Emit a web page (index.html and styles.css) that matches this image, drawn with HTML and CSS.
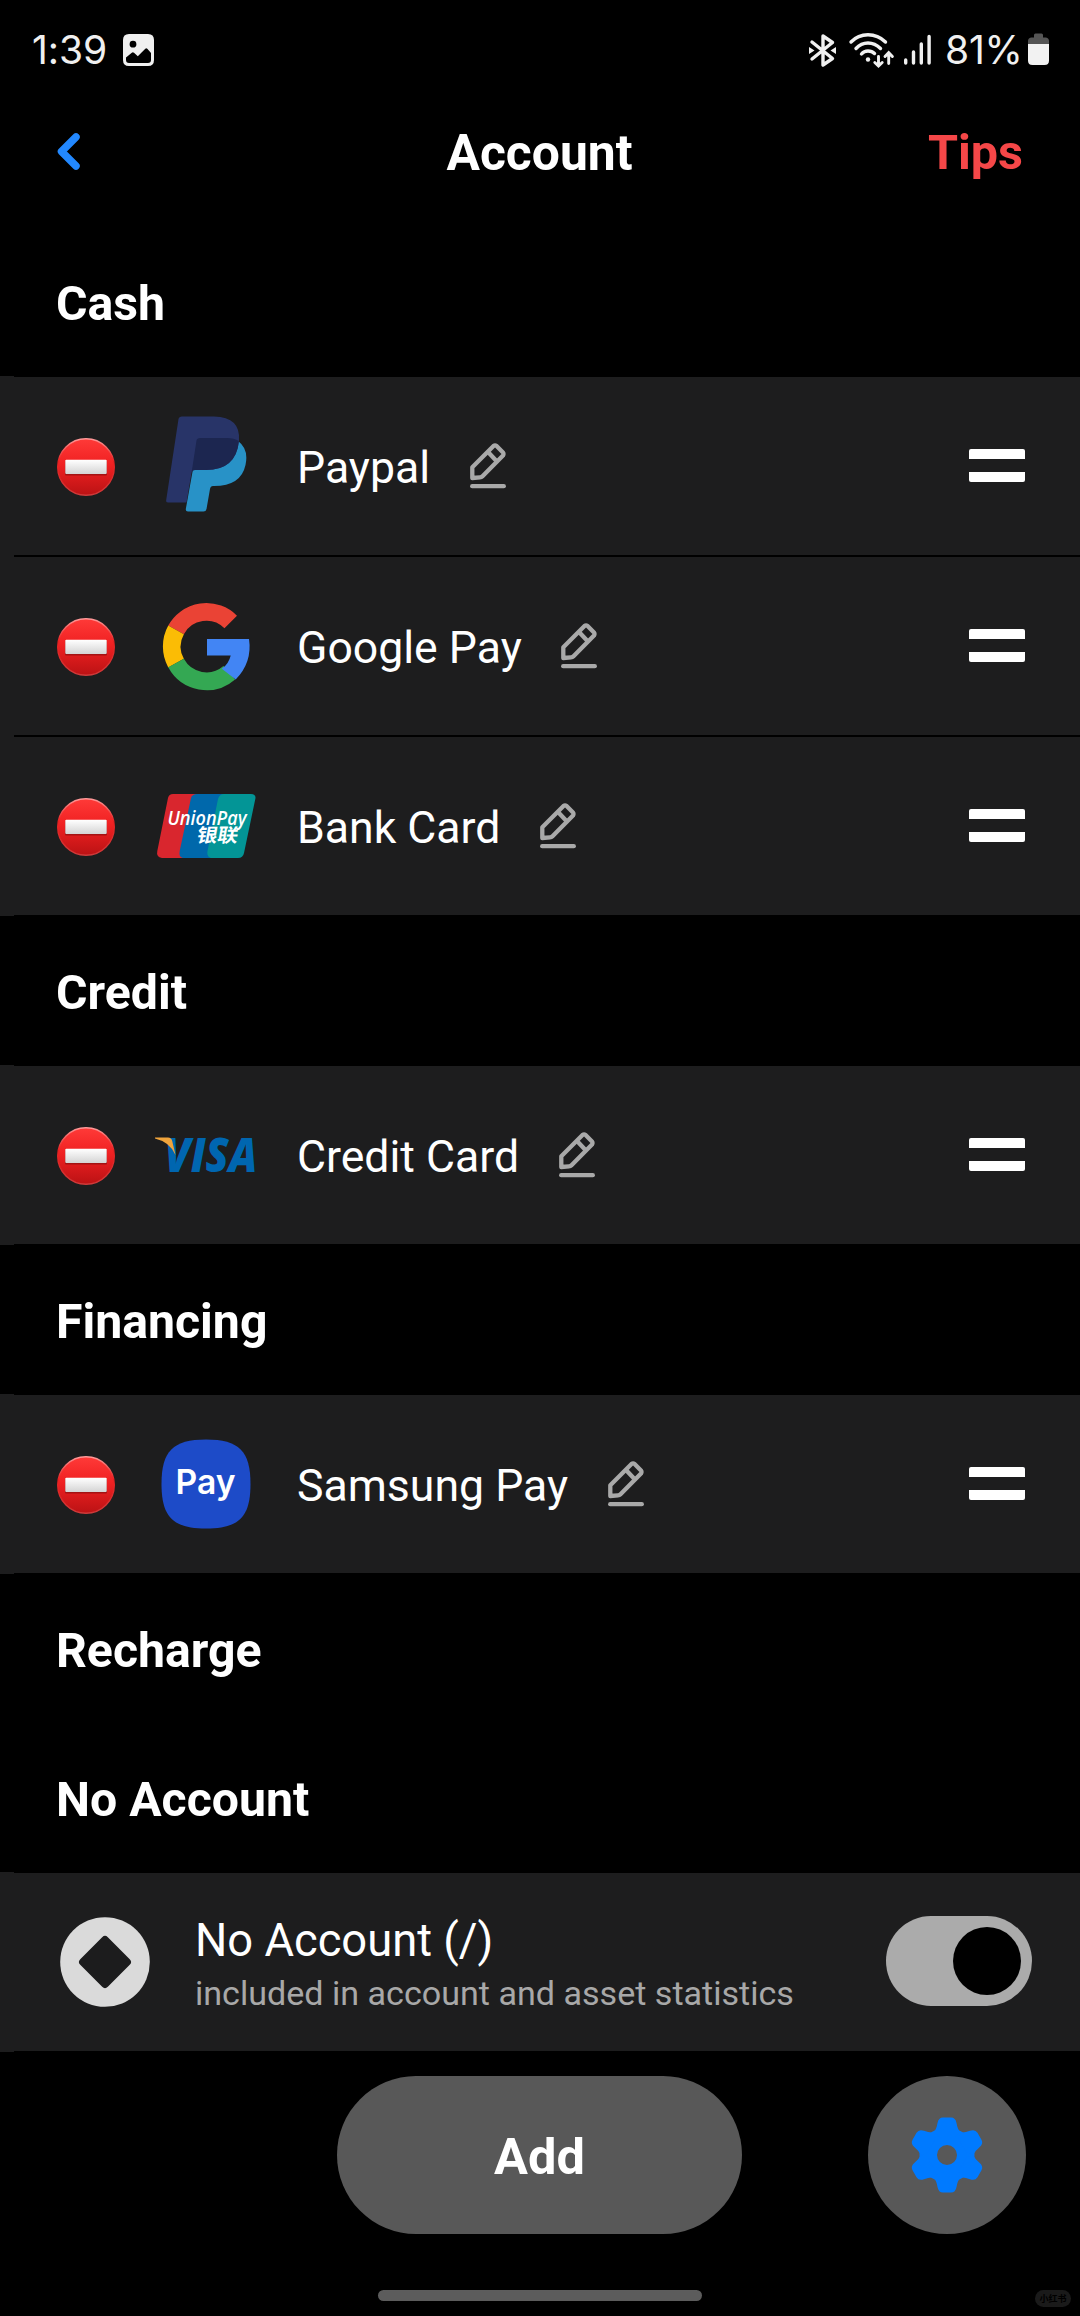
FILE: index.html
```
<!DOCTYPE html>
<html lang="en">
<head>
<meta charset="utf-8">
<title>Account</title>
<link rel="stylesheet" href="styles.css">
</head>
<body>
<svg width="0" height="0" class="defs" aria-hidden="true">
  <defs>
    <linearGradient id="red" x1="0" y1="0" x2="0" y2="1"><stop offset="0" stop-color="#ff3a38"/><stop offset=".45" stop-color="#f02122"/><stop offset="1" stop-color="#bb1214"/></linearGradient>
    <linearGradient id="rim" x1="0" y1="0" x2="0" y2="1"><stop offset="0" stop-color="#ff9a9a"/><stop offset=".4" stop-color="#e82020"/><stop offset="1" stop-color="#cf3a3a"/></linearGradient>
    <linearGradient id="bar" x1="0" y1="0" x2="0" y2="1"><stop offset="0" stop-color="#ffffff"/><stop offset="1" stop-color="#d4d4d4"/></linearGradient>
    <symbol id="remove" viewBox="0 0 58 58">
      <circle cx="29" cy="29" r="28.3" fill="url(#red)" stroke="url(#rim)" stroke-width="1.4"/>
      <rect x="8" y="23" width="42" height="14.6" rx="1" fill="#8c0f10" opacity=".7"/>
      <rect x="8.3" y="21.8" width="41.4" height="14.2" rx="1" fill="url(#bar)"/>
    </symbol>
    <symbol id="edit" viewBox="0 0 36 46">
      <g fill="none" stroke="#a9a9a9" stroke-width="4.300" stroke-linejoin="round" stroke-linecap="round">
        <path d="M2.3 24.2 23.5 3Q25 1.800 26.600 3L33 9.500Q34 11 33 12.600L12.500 33.200Q11.500 34.300 10 34.300L2.300 35Z"/>
        <path d="M18.500 9.500 26 17.500"/>
        <path d="M2.200 43.200H33.800"/>
      </g>
    </symbol>
  </defs>
</svg>
<div class="screen">
  <div class="status">
    <span class="clock">1:39</span>
    <svg class="photo" width="31" height="32" viewBox="0 0 31 32"><path fill="#f0f0f0" fill-rule="evenodd" d="M6 0H25Q31 0 31 6V26Q31 32 25 32H6Q0 32 0 26V6Q0 0 6 0ZM10 6.800A3.400 3.400 0 1 0 10 13.600A3.400 3.400 0 1 0 10 6.800ZM3 23.500V26Q3 29 6 29H25Q28 29 28 26V19L24.300 14.800Q23.300 13.800 22.300 14.800L14.800 22.300L11 18.800Q9.900 17.900 8.800 18.800Z"/></svg>
    <svg class="bt" width="27" height="33" viewBox="0 0 27 33"><path d="M3 8 23.500 24.500 14 31V2L23.500 8.500 3 25" fill="none" stroke="#f0f0f0" stroke-width="3.400" stroke-linejoin="round" stroke-linecap="round"/><path d="M0 13 5.500 16.500 0 20ZM27 13 21.500 16.500 27 20Z" fill="#f0f0f0"/></svg>
    <svg class="wifi" width="46" height="36" viewBox="0 0 46 36"><g fill="none" stroke="#f0f0f0" stroke-width="3.400" stroke-linecap="round"><path d="M2 10Q9 2.800 19 2.800T36.500 10"/><path d="M7 16.500Q12 11 19 11T31.500 16.500"/><path d="M12.500 22Q15 19 19 19T25.500 21.500"/><path d="M29.500 24.500V33M25.800 30.500 29.500 34 33.200 30.500M39.700 31.500V21M36 24.500 39.700 20.700 43.400 24.500" stroke-width="2.900"/></g><circle cx="19" cy="27.500" r="2.200" fill="#f0f0f0"/></svg>
    <svg class="signal" width="27" height="31" viewBox="0 0 27 31"><path d="M1.700 26V29M9.500 18V29M17.300 10V29M25.100 2.500V29" stroke="#f0f0f0" stroke-width="3.400" stroke-linecap="round"/></svg>
    <span class="percent">81%</span>
    <svg class="battery" width="21" height="32" viewBox="0 0 21 32"><path d="M0 11V8Q0 5 3 4.500H6V2Q6 .5 7.500 .5H13.500Q15 .5 15 2V4.500H18Q21 5 21 8V11Z" fill="#555"/><path d="M0 11H21V27.500Q21 32 16.500 32H4.500Q0 32 0 27.500Z" fill="#f2f2f2"/></svg>
  </div>
  <header class="nav">
    <svg class="back" width="24" height="40" viewBox="0 0 24 40"><path d="M20 5 5.500 19.500 20 34" fill="none" stroke="#2288ff" stroke-width="7.500" stroke-linecap="round" stroke-linejoin="round"/></svg>
    <h1>Account</h1>
    <span class="tips">Tips</span>
  </header>
  <main>
    <h2>Cash</h2>
    <section>
      <div class="row">
        <svg class="remove"><use href="#remove"/></svg>
        <div class="logo"><svg class="paypal" width="82" height="96" viewBox="0 0 82 96">
          <path fill="#2892c7" d="M72 25Q83 33 79.500 49Q75 70 48 70H47Q44.500 70 44 73L40.500 93Q40 95.500 37.500 95.500H22Q19.500 95.500 19.800 93L29 42Z"/>
          <path fill="#283468" d="M12.500 3Q13 .5 16 .5H48Q75 1 73 25Q70 54 40 54H29Q26 54 25.500 57L20.500 86.500H2Q-.200 86.500 .2 84Z"/>
          <path fill="#1c2650" d="M30.500 24.500Q31 22 34 22H61Q68 22 72.900 25Q70 54 40 54H29Q26 54 25.500 57Z"/>
        </svg></div>
        <span class="name">Paypal</span><svg class="edit"><use href="#edit"/></svg>
        <i class="handle"></i>
      </div>
      <div class="row">
        <svg class="remove"><use href="#remove"/></svg>
        <div class="logo"><svg class="google" width="87" height="87" viewBox="0 0 88 88">
          <g fill="none" stroke-width="18">
            <path stroke="#ea4335" d="M68.500 19.200A35 35 0 0 0 13.200 27.200"/>
            <path stroke="#fbbc05" d="M13.200 27.200A35 35 0 0 0 13.200 60.800"/>
            <path stroke="#34a853" d="M13.200 60.800A35 35 0 0 0 67 70.500"/>
          </g>
          <path fill="#4285f4" d="M44.500 36.500H87Q90.500 60 73.500 77.500L59.500 66.500Q66.500 61.500 68.500 53H44.500Z"/>
        </svg></div>
        <span class="name">Google Pay</span><svg class="edit"><use href="#edit"/></svg>
        <i class="handle"></i>
      </div>
      <div class="row">
        <svg class="remove"><use href="#remove"/></svg>
        <div class="logo"><svg class="union" width="99" height="64" viewBox="0 0 99 64">
          <path fill="#d9262e" d="M16 0H50L40 64H5Q-1 63 .3 57L11 4Q12 0 16 0Z"/>
          <path fill="#0068ab" d="M40 0H72L62 64H26Q21.500 63 22.700 57L34 4Q35.500 0 40 0Z"/>
          <path fill="#039596" d="M67 0H94Q99.500 .5 98.300 5L87 59Q86 64 81 64H54Q49.500 63 50.500 57L61 5Q62.500 0 67 0Z"/>
          <text class="union-en" x="10.500" y="31" textLength="79" lengthAdjust="spacingAndGlyphs">UnionPay</text>
          <text class="union-cn" transform="translate(39 48) skewX(-10)" textLength="41" lengthAdjust="spacingAndGlyphs">银联</text>
        </svg></div>
        <span class="name">Bank Card</span><svg class="edit"><use href="#edit"/></svg>
        <i class="handle"></i>
      </div>
    </section>
    <h2>Credit</h2>
    <section>
      <div class="row">
        <svg class="remove"><use href="#remove"/></svg>
        <div class="logo"><svg class="visa" width="102" height="36" viewBox="0 0 102 36">
          <text class="visa-word" x="9.500" y="35" textLength="93" lengthAdjust="spacingAndGlyphs">VISA</text>
          <path fill="#f0a43c" d="M0 .5H13Q16.500 .5 17.200 4L20.500 18Q15 5 0 1.500Z"/>
        </svg></div>
        <span class="name">Credit Card</span><svg class="edit"><use href="#edit"/></svg>
        <i class="handle"></i>
      </div>
    </section>
    <h2>Financing</h2>
    <section>
      <div class="row">
        <svg class="remove"><use href="#remove"/></svg>
        <div class="logo"><svg width="90" height="90" viewBox="0 0 90 90">
          <path fill="#1d4bc8" d="M45 .5C78 .5 89.500 12 89.500 45S78 89.500 45 89.500 .5 78 .5 45 12 .5 45 .5Z"/>
          <text class="pay-word" x="14.500" y="55" textLength="60" lengthAdjust="spacingAndGlyphs">Pay</text>
        </svg></div>
        <span class="name">Samsung Pay</span><svg class="edit"><use href="#edit"/></svg>
        <i class="handle"></i>
      </div>
    </section>
    <h2>Recharge</h2>
    <h2>No Account</h2>
    <section>
      <div class="row none">
        <svg width="90" height="90" viewBox="0 0 90 90"><circle cx="45" cy="45" r="44.800" fill="#dadada"/><rect x="25.500" y="25.500" width="39" height="39" rx="4" transform="rotate(45 45 45)" fill="#1c1c1d"/></svg>
        <div class="labels"><span class="title">No Account (/)</span><span class="sub">included in account and asset statistics</span></div>
        <span class="toggle"><i></i></span>
      </div>
    </section>
  </main>
  <footer>
    <button class="add">Add</button>
    <button class="settings"><svg width="72" height="76" viewBox="-36 -38 72 76">
      <g fill="#007aff"><path fill-rule="evenodd" d="M0-27.500A27.500 27.500 0 1 0 0 27.500A27.500 27.500 0 1 0 0-27.500ZM0-10A10 10 0 1 1 0 10A10 10 0 1 1 0-10Z"/>
      <g id="tooth"><path d="M-13-23Q-10.500-26-9.500-32Q-8.500-37.500-4-37.500H4Q8.500-37.500 9.500-32Q10.500-26 13-23L8-18H-8Z"/></g>
      <use href="#tooth" transform="rotate(60)"/><use href="#tooth" transform="rotate(120)"/><use href="#tooth" transform="rotate(180)"/><use href="#tooth" transform="rotate(240)"/><use href="#tooth" transform="rotate(300)"/></g>
    </svg></button>
  </footer>
  <div class="home"></div>
  <span class="stamp">小红书</span>
</div>
</body>
</html>
```
FILE: styles.css
```
* { box-sizing: border-box; }
body { margin: 0; background: #000; color: #fff; font-family: Roboto, "Noto Sans CJK SC", sans-serif; }
svg { display: block; flex: none; overflow: visible; }
.defs { position: absolute; }
.screen { position: relative; width: 1080px; height: 2316px; background: #000; overflow: hidden; display: flex; flex-direction: column; }

.status { height: 100px; display: flex; align-items: flex-start; padding-left: 32px; color: #f0f0f0; font-family: Inter, sans-serif; font-size: 39px; line-height: 99px; }
.clock { width: 91px; letter-spacing: -0.1px; }
.photo { margin-top: 34px; }
.bt { margin: 34px 0 0 655px; }
.wifi { margin: 32px 0 0 13px; }
.signal { margin: 34px 0 0 9px; }
.percent { width: 97px; padding-left: 14px; letter-spacing: -0.2px; }
.battery { margin-top: 33px; }

.nav { height: 127px; display: grid; grid-template-columns: 1fr auto 1fr; padding: 0 57px 0 56px; font-size: 48.5px; font-weight: 700; line-height: 106px; }
.nav h1 { margin: 0; font-size: 49.8px; font-weight: 700; }
.back { margin-top: 32px; }
.tips { justify-self: end; color: #f54748; }

h2 { margin: 0; height: 149px; padding-left: 56px; font-size: 48.2px; font-weight: 700; line-height: 153px; }
section { background: linear-gradient(#1d1d1e, #1d1d1e) 0 0 / 14px 100% no-repeat; }
.row { height: 180px; margin-left: 14px; padding: 0 55px 0 43px; display: flex; align-items: center; background: #1d1d1e; border: solid #000; border-width: 1px 0; }
.remove { width: 58px; height: 58px; margin-top: 2px; }
.logo { width: 104px; margin: 0 39px 0 39px; display: flex; justify-content: center; }
.paypal { margin: -4px 0 0 2px; }
.google { margin: 1px 0 0 1px; }
.union { margin-left: 1px; margin-top: -1px; }
.visa { margin-top: -1px; }
.name { font-size: 44.6px; line-height: 60px; padding-top: 3px; }
.edit { width: 36px; height: 46px; margin-left: 39.5px; }
.handle { width: 56px; height: 33px; margin: -2px 0 0 auto; border: solid #fff; border-width: 10px 0; border-radius: 2px; }
.union-en { font: italic 600 19px "Open Sans", sans-serif; fill: #fff; }
.union-cn { font: 700 19px "Noto Sans CJK SC", sans-serif; fill: #fff; }
.visa-word { font: italic 800 47px "Open Sans", sans-serif; fill: #0066b0; }
.pay-word { font: 600 34px Inter, sans-serif; fill: #fff; }

.none { padding: 0 48px 0 46px; }
.labels { margin: 8px 0 0 45px; display: flex; flex-direction: column; }
.title { font-size: 45.3px; line-height: 54px; }
.sub { font-size: 34.1px; line-height: 50px; color: #a8a8a8; }
.toggle { width: 146px; height: 90px; margin: -2px 0 0 auto; padding: 11px; border-radius: 45px; background: #ababab; display: flex; justify-content: flex-end; }
.toggle i { width: 68px; height: 68px; border-radius: 50%; background: #000; }

footer { display: flex; margin-top: 24px; padding-left: 337px; }
button { padding: 0; border: 0; height: 158px; border-radius: 79px; background: #585858; color: #fff; font: 700 50.5px/154px Roboto, sans-serif; }
.add { width: 405px; padding-top: 3px; }
.settings { width: 158px; margin-left: 126px; display: flex; align-items: center; justify-content: center; }
.home { width: 324px; height: 11px; margin: 56px auto 0; border-radius: 5.5px; background: #5c5c5c; }
.stamp { position: absolute; left: 1035px; top: 2290px; width: 36px; height: 17px; border-radius: 9px; background: #1a1a1a; color: #000; font: 700 9px/17px "Noto Sans CJK SC", sans-serif; text-align: center; }
```
